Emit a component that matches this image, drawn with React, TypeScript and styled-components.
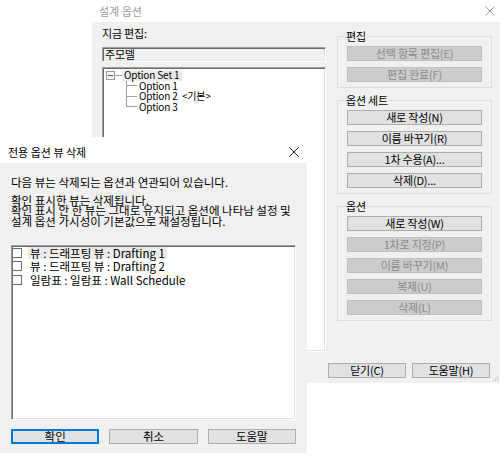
import React from "react";
import styled, { createGlobalStyle, css } from "styled-components";

const FONT = `"Noto Sans CJK KR", "Liberation Sans", sans-serif`;

const Global = createGlobalStyle`
  html, body { margin: 0; padding: 0; background: #ffffff; }
  body { font-family: ${FONT}; }
  * { box-sizing: border-box; }
`;

const Desktop = styled.div`
  position: relative;
  width: 500px;
  height: 464px;
  overflow: hidden;
  background: #ffffff;
  font-family: ${FONT};
  color: #000;
  font-size: 11px;
  letter-spacing: -0.2px;
`;

const Window = styled.section<{ $x: number; $y: number; $w: number; $h: number }>`
  position: absolute;
  left: ${(p) => p.$x}px;
  top: ${(p) => p.$y}px;
  width: ${(p) => p.$w}px;
  height: ${(p) => p.$h}px;
  display: flex;
  flex-direction: column;
  background: #f0f0f0;
`;

const TitleBar = styled.header<{ $h: number; $padTop: number; $padRight: number; $inactive?: boolean }>`
  flex: none;
  height: ${(p) => p.$h}px;
  padding: ${(p) => p.$padTop}px ${(p) => p.$padRight}px 0 0;
  background: #ffffff;
  display: flex;
  align-items: center;
  justify-content: space-between;
  color: ${(p) => (p.$inactive ? "#9c9c9c" : "#000")};
`;

const TitleText = styled.span<{ $left: number }>`
  padding-left: ${(p) => p.$left}px;
  font-size: 11px;
  line-height: 13px;
  letter-spacing: 0;
`;

const CloseIcon = ({ color }: { color: string }) => (
  <svg width="10" height="10" viewBox="0 0 10 10">
    <path d="M0.5 0.5 L9.5 9.5 M9.5 0.5 L0.5 9.5" stroke={color} strokeWidth="1" />
  </svg>
);

/* ---------- back dialog ---------- */

const BackClient = styled.div`
  position: relative;
  flex: 1;
  display: flex;
  flex-direction: column;
  padding: 5px 8px 5px 10px;
`;

const MainGrid = styled.div`
  display: grid;
  grid-template-columns: 224px 155px;
  column-gap: 11px;
`;

const LeftColumn = styled.div`
  display: flex;
  flex-direction: column;
`;

const FieldLabel = styled.div`
  height: 12px;
  line-height: 12px;
  margin-bottom: 8px;
`;

const sunken = css`
  border-top: 1px solid #a0a0a0;
  border-left: 1px solid #a0a0a0;
  border-right: 1px solid #ffffff;
  border-bottom: 1px solid #ffffff;
  box-shadow: inset 1px 1px 0 #696969, inset -1px -1px 0 #e3e3e3;
`;

const ReadOnlyField = styled.div`
  ${sunken};
  height: 15px;
  background: #f0f0f0;
  padding-left: 2px;
  line-height: 13px;
`;

const TreeBox = styled.div`
  ${sunken};
  margin-top: 5px;
  height: 285px;
  background: #ffffff;
  padding: 2px 2px;
  font-size: 10px;
  letter-spacing: -0.15px;
`;

const TreeRow = styled.div`
  display: flex;
  align-items: center;
  height: 10.5px;
`;

const Expander = styled.span`
  width: 9px;
  height: 9px;
  margin-left: 1px;
  border: 1px solid #9a9a9a;
  background: #f4f4f4;
  display: flex;
  align-items: center;
  justify-content: center;
  &::before {
    content: "";
    width: 5px;
    height: 1px;
    background: #3b5f9a;
  }
`;

const RootConnector = styled.span`
  width: 7px;
  height: 1px;
  background: #a0a0a0;
`;

const NodeLabel = styled.span<{ $selected?: boolean }>`
  white-space: pre;
  line-height: 10.5px;
  padding: 0 2px;
  background: ${(p) => (p.$selected ? "#ececec" : "transparent")};
`;

const TreeChildren = styled.div`
  position: relative;
  &::before {
    content: "";
    position: absolute;
    left: 21px;
    top: 0;
    bottom: 5px;
    border-left: 1px solid #a0a0a0;
  }
`;

const ChildRow = styled(TreeRow)`
  padding-left: 21px;
  &::before {
    content: "";
    width: 11px;
    height: 1px;
    background: #a0a0a0;
  }
`;

const RightColumn = styled.div`
  display: flex;
  flex-direction: column;
  gap: 6px;
  padding-top: 3px;
`;

const Group = styled.fieldset`
  margin: 0;
  min-width: 0;
  padding: 4px 9px 5px 9px;
  border: 1px solid #dcdcdc;
  display: flex;
  flex-direction: column;
  gap: 6px;
`;

const GroupLegend = styled.legend`
  padding: 0 1px;
  margin-left: -2px;
  line-height: 12px;
  font-size: 11px;
`;

const Button = styled.button<{ $isDefault?: boolean }>`
  height: 15px;
  padding: 0;
  margin: 0;
  font-family: ${FONT};
  font-size: inherit;
  letter-spacing: inherit;
  line-height: 13px;
  color: #000;
  background: #e1e1e1;
  border: 1px solid #adadad;
  &:disabled {
    background: #cccccc;
    border-color: #bfbfbf;
    color: #8a8a8a;
  }
  ${(p) =>
    p.$isDefault &&
    css`
      border: 2px solid #0078d7;
      line-height: 11px;
    `}
`;

const BackFooter = styled.div`
  margin-top: 11px;
  margin-right: 2px;
  display: flex;
  justify-content: flex-end;
  gap: 6px;
`;

const FooterButton = styled(Button)`
  width: 78px;
`;

const Grip = styled.svg`
  position: absolute;
  right: 1px;
  bottom: 1px;
`;

/* ---------- front dialog ---------- */

const FrontClient = styled.div`
  flex: 1;
  display: flex;
  flex-direction: column;
  padding: 13px 11px 9px 11px;
  font-size: 11.5px;
  letter-spacing: 0;
`;

const Message = styled.p`
  margin: 0;
  line-height: 12px;
`;

const Note = styled.p`
  margin: 6.5px 0 0 0;
  line-height: 10.5px;
`;

const ViewList = styled.ul`
  ${sunken};
  list-style: none;
  margin: 19px 0 0 0;
  padding: 0;
  height: 175px;
  background: #ffffff;
`;

const ViewItem = styled.li`
  height: 13.5px;
  display: flex;
  align-items: center;
  gap: 6px;
`;

const CheckBox = styled.span`
  width: 10px;
  height: 10px;
  border: 1px solid #6d6d6d;
  background: #ffffff;
  flex: none;
`;

const ItemText = styled.span<{ $focused?: boolean }>`
  line-height: 12px;
  padding: 0 2px;
  background: ${(p) => (p.$focused ? "#ebebeb" : "transparent")};
`;

const FrontButtons = styled.div`
  margin-top: 9px;
  display: grid;
  grid-template-columns: repeat(3, 1fr);
  column-gap: 10px;
`;

export default function App() {
  const views = [
    "뷰 : 드래프팅 뷰 : Drafting 1",
    "뷰 : 드래프팅 뷰 : Drafting 2",
    "일람표 : 일람표 : Wall Schedule",
  ];
  return (
    <Desktop>
      <Global />
      <Window $x={92} $y={0} $w={408} $h={383}>
        <TitleBar $h={22} $padTop={0} $padRight={5} $inactive>
          <TitleText $left={7}>설계 옵션</TitleText>
          <CloseIcon color="#9c9c9c" />
        </TitleBar>
        <BackClient>
          <MainGrid>
            <LeftColumn>
              <FieldLabel>지금 편집:</FieldLabel>
              <ReadOnlyField>주모델</ReadOnlyField>
              <TreeBox>
                <TreeRow>
                  <Expander />
                  <RootConnector />
                  <NodeLabel $selected>Option Set 1</NodeLabel>
                </TreeRow>
                <TreeChildren>
                  <ChildRow>
                    <NodeLabel>Option 1</NodeLabel>
                  </ChildRow>
                  <ChildRow>
                    <NodeLabel>{"Option 2  <기본>"}</NodeLabel>
                  </ChildRow>
                  <ChildRow>
                    <NodeLabel>Option 3</NodeLabel>
                  </ChildRow>
                </TreeChildren>
              </TreeBox>
            </LeftColumn>
            <RightColumn>
              <Group>
                <GroupLegend>편집</GroupLegend>
                <Button disabled>선택 항목 편집(E)</Button>
                <Button disabled>편집 완료(F)</Button>
              </Group>
              <Group>
                <GroupLegend>옵션 세트</GroupLegend>
                <Button>새로 작성(N)</Button>
                <Button>이름 바꾸기(R)</Button>
                <Button>1차 수용(A)...</Button>
                <Button>삭제(D)...</Button>
              </Group>
              <Group>
                <GroupLegend>옵션</GroupLegend>
                <Button>새로 작성(W)</Button>
                <Button disabled>1차로 지정(P)</Button>
                <Button disabled>이름 바꾸기(M)</Button>
                <Button disabled>복제(U)</Button>
                <Button disabled>삭제(L)</Button>
              </Group>
            </RightColumn>
          </MainGrid>
          <BackFooter>
            <FooterButton>닫기(C)</FooterButton>
            <FooterButton>도움말(H)</FooterButton>
          </BackFooter>
          <Grip width="7" height="7" viewBox="0 0 7 7">
            <rect x="5" y="1" width="1" height="1" fill="#b8b8b8" />
            <rect x="3" y="3" width="1" height="1" fill="#b8b8b8" />
            <rect x="5" y="3" width="1" height="1" fill="#b8b8b8" />
            <rect x="1" y="5" width="1" height="1" fill="#b8b8b8" />
            <rect x="3" y="5" width="1" height="1" fill="#b8b8b8" />
            <rect x="5" y="5" width="1" height="1" fill="#b8b8b8" />
          </Grip>
        </BackClient>
      </Window>

      <Window $x={0} $y={137} $w={307} $h={316}>
        <TitleBar $h={26} $padTop={4} $padRight={8}>
          <TitleText $left={8}>전용 옵션 뷰 삭제</TitleText>
          <CloseIcon color="#222" />
        </TitleBar>
        <FrontClient>
          <Message>다음 뷰는 삭제되는 옵션과 연관되어 있습니다.</Message>
          <Note>
            확인 표시한 뷰는 삭제됩니다.
            <br />
            확인 표시 안 한 뷰는 그대로 유지되고 옵션에 나타남 설정 및
            <br />
            설계 옵션 가시성이 기본값으로 재설정됩니다.
          </Note>
          <ViewList>
            {views.map((v, i) => (
              <ViewItem key={v}>
                <CheckBox />
                <ItemText $focused={i === 0}>{v}</ItemText>
              </ViewItem>
            ))}
          </ViewList>
          <FrontButtons>
            <Button $isDefault>확인</Button>
            <Button>취소</Button>
            <Button>도움말</Button>
          </FrontButtons>
        </FrontClient>
      </Window>
    </Desktop>
  );
}
